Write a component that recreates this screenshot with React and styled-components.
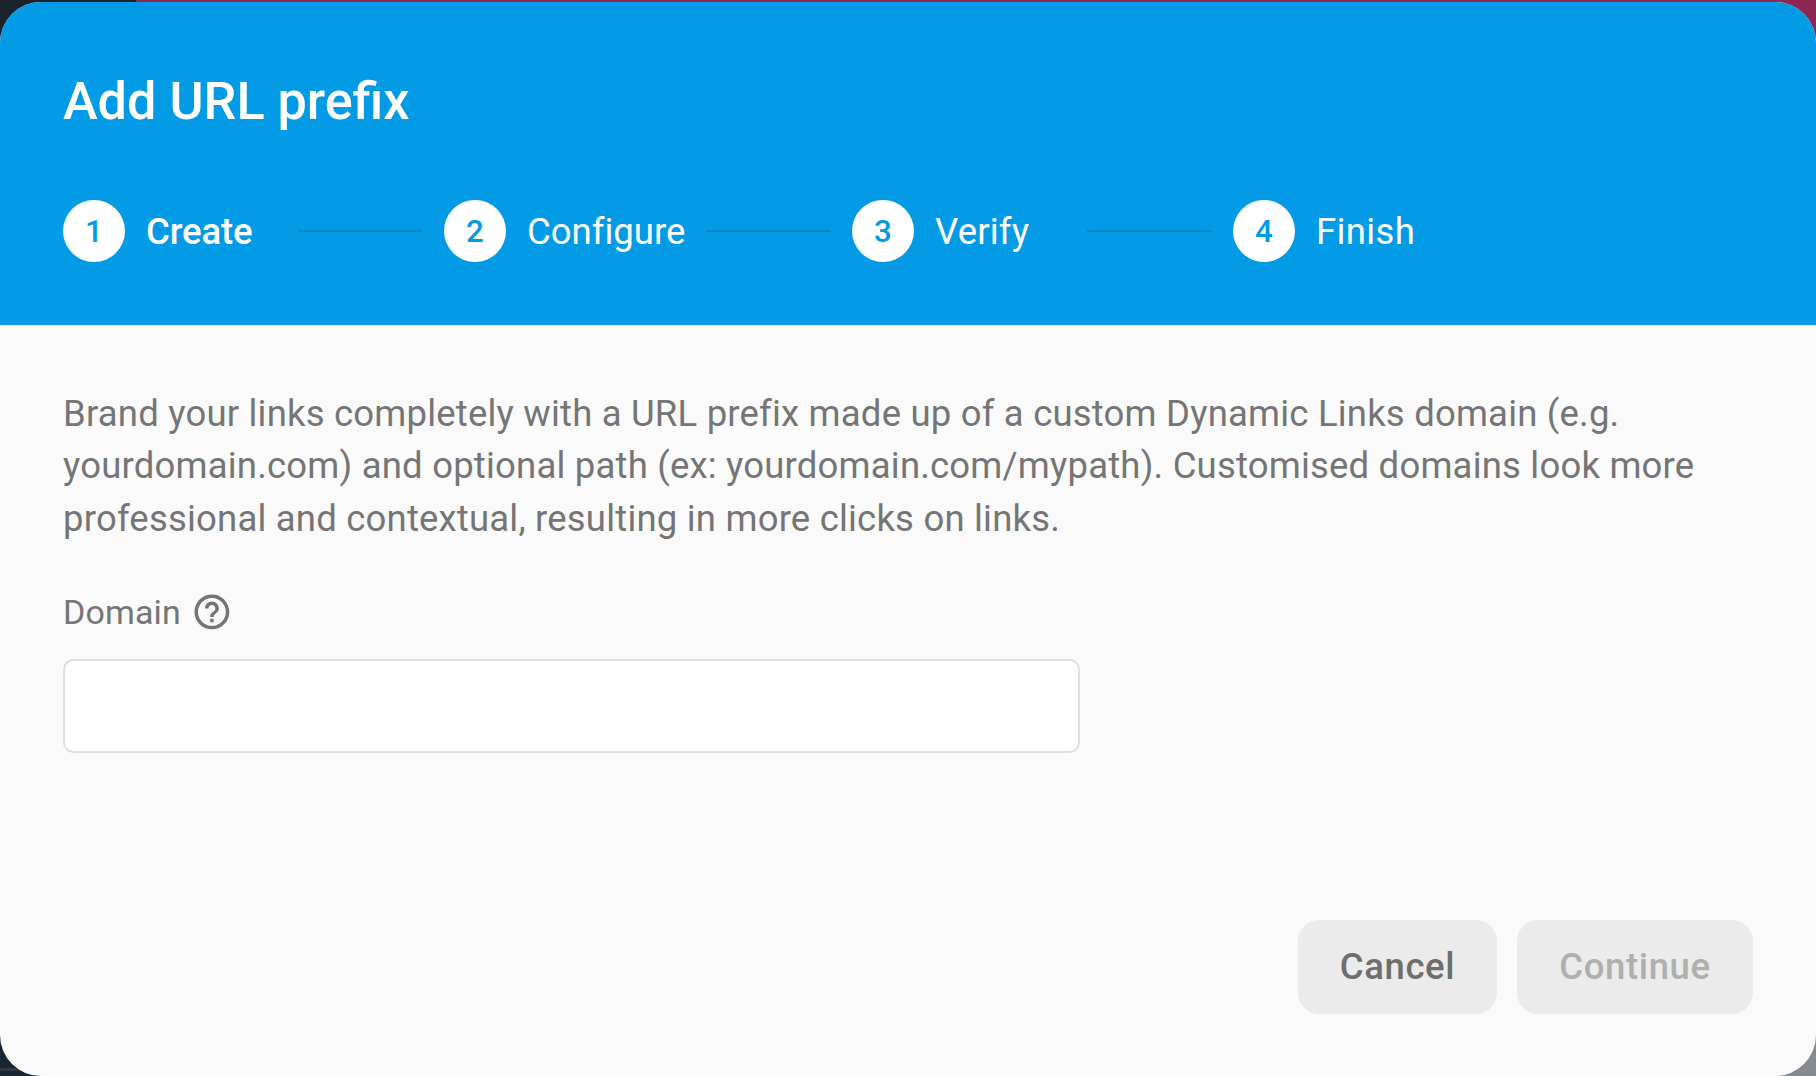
import React from "react";
import styled, { createGlobalStyle } from "styled-components";

const GlobalStyle = createGlobalStyle`
  *, *::before, *::after { box-sizing: border-box; }
  body {
    margin: 0;
    overflow: hidden;
    font-family: Roboto, "Noto Sans", sans-serif;
  }
`;

const Backdrop = styled.div`
  height: 1076px;
  padding-top: 2px;
  background:
    linear-gradient(#303943, #303943) 0 1068px / 40px 3px no-repeat,
    linear-gradient(to right, #1a222d 136px, #8c2752 136px) 0 0 / 100% 540px no-repeat,
    linear-gradient(to right, #1a2533 900px, #858a90 900px);
`;

const Dialog = styled.section`
  display: flex;
  flex-direction: column;
  height: 1074px;
  border-radius: 41px;
  overflow: hidden;
  background: #fafafa;
`;

const Header = styled.header`
  flex: none;
  height: 323px;
  padding: 69px 63px 0;
  background: #039be5;
  color: #fff;
`;

const Title = styled.h2`
  margin: 0;
  font-size: 52.2px;
  font-weight: 500;
  line-height: 62px;
`;

const Steps = styled.ol`
  display: flex;
  align-items: center;
  gap: 21px;
  height: 62px;
  margin: 67px 0 0;
  padding: 0;
  list-style: none;
`;

const Step = styled.li`
  display: flex;
  align-items: center;
  gap: 21px;
`;

const StepNumber = styled.span`
  display: flex;
  align-items: center;
  justify-content: center;
  width: 62px;
  height: 62px;
  border-radius: 50%;
  background: #fff;
  color: #039be5;
  font-size: 31.3px;
  font-weight: 500;
`;

const StepLabel = styled.span`
  width: ${(p) => p.$width || "131px"};
  padding-top: 2px;
  font-size: 36.5px;
  font-weight: ${(p) => (p.$active ? 500 : 400)};
  line-height: 52px;
  letter-spacing: ${(p) => p.$tracking || "0.2px"};
  white-space: nowrap;
`;

const Connector = styled.span`
  width: 125px;
  height: 2px;
  background: rgba(0, 0, 0, 0.12);
`;

const Content = styled.div`
  flex: 1;
  padding: 62.9px 63px 0;
  color: #757575;
`;

const Description = styled.p`
  margin: 0;
  font-size: 36.5px;
  line-height: 52.4px;
  letter-spacing: 0.195px;
`;

const FieldLabel = styled.label`
  display: flex;
  align-items: center;
  gap: 10.4px;
  margin-top: 45.9px;
  font-size: 34px;
  line-height: 42px;
  letter-spacing: 0.15px;
`;

const HelpIcon = styled.svg`
  width: 41.8px;
  height: 41.8px;
  fill: currentColor;
`;

const DomainInput = styled.input`
  display: block;
  width: 1017px;
  height: 94px;
  margin-top: 26px;
  padding: 0 31px;
  border: 2px solid #e0e0e0;
  border-radius: 10.4px;
  background: #fff;
  color: #212121;
  font: 400 36.5px Roboto, sans-serif;
  outline: none;
`;

const Actions = styled.footer`
  display: flex;
  justify-content: flex-end;
  gap: 20px;
  padding: 0 63px 62px;
`;

const Button = styled.button`
  width: ${(p) => p.$width};
  height: 94px;
  padding: 0 0 2px;
  border: 0;
  border-radius: 21px;
  background: #ebebeb;
  color: ${(p) => (p.disabled ? "#afafaf" : "#6e6e6e")};
  font: 500 36.5px Roboto, sans-serif;
  letter-spacing: 0.6px;
`;

const steps = [
  { label: "Create", active: true, tracking: "-0.15px" },
  { label: "Configure", width: "158px", tracking: "0.01px" },
  { label: "Verify" },
  { label: "Finish", tracking: "0.35px" },
];

export default function App() {
  return (
    <>
      <GlobalStyle />
      <Backdrop>
        <Dialog role="dialog" aria-labelledby="dialog-title">
          <Header>
            <Title id="dialog-title">Add URL prefix</Title>
            <Steps>
              {steps.map(({ label, active, width, tracking }, i) => (
                <React.Fragment key={label}>
                  {i > 0 && <Connector />}
                  <Step>
                    <StepNumber>{i + 1}</StepNumber>
                    <StepLabel
                      $active={active}
                      $width={width}
                      $tracking={tracking}
                    >
                      {label}
                    </StepLabel>
                  </Step>
                </React.Fragment>
              ))}
            </Steps>
          </Header>
          <Content>
            <Description>
              Brand your links completely with a URL prefix made up of a custom
              Dynamic Links domain (e.g. yourdomain.com) and optional path (ex:
              yourdomain.com/mypath). Customised domains look more professional
              and contextual, resulting in more clicks on links.
            </Description>
            <FieldLabel htmlFor="domain">
              Domain
              <HelpIcon viewBox="0 0 24 24" aria-hidden="true">
                <path d="M11 18h2v-2h-2v2zm1-16C6.48 2 2 6.48 2 12s4.48 10 10 10 10-4.48 10-10S17.52 2 12 2zm0 18c-4.41 0-8-3.59-8-8s3.59-8 8-8 8 3.59 8 8-3.59 8-8 8zm0-14c-2.21 0-4 1.79-4 4h2c0-1.1.9-2 2-2s2 .9 2 2c0 2-3 1.75-3 5h2c0-2.25 3-2.5 3-5 0-2.21-1.79-4-4-4z" />
              </HelpIcon>
            </FieldLabel>
            <DomainInput id="domain" />
          </Content>
          <Actions>
            <Button $width="199px">Cancel</Button>
            <Button $width="236px" disabled>
              Continue
            </Button>
          </Actions>
        </Dialog>
      </Backdrop>
    </>
  );
}
